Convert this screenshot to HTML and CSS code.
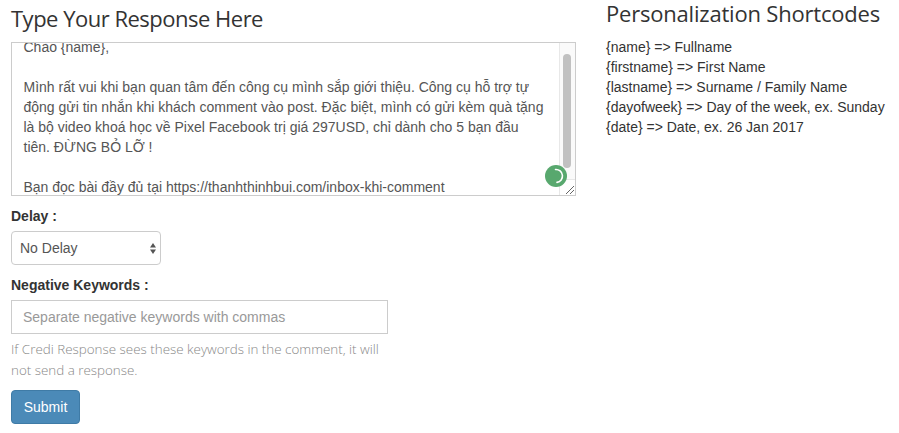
FILE: index.html
```html
<!DOCTYPE html>
<html lang="vi">
<head>
    <meta charset="UTF-8">
    <meta name="viewport" content="width=device-width, initial-scale=1.0">
    <title>Type Your Response Here</title>
    <link rel="stylesheet" href="styles.css">
</head>
<body>

    <div class="page">
        <div class="response-col">
            <h3 class="col-title response-title">Type Your Response Here</h3>

            <div class="message-box">
                <div class="message-text">
                    <p>Chào {name},</p>
                    <p>Mình rất vui khi bạn quan tâm đến công cụ mình sắp giới thiệu. Công cụ hỗ trợ tự động gửi tin nhắn khi khách comment vào post. Đặc biệt, mình có gửi kèm quà tặng là bộ video khoá học về Pixel Facebook trị giá 297USD, chỉ dành cho 5 bạn đầu tiên. ĐỪNG BỎ LỠ !</p>
                    <p>Bạn đọc bài đầy đủ tại https://thanhthinhbui.com/inbox-khi-comment</p>
                </div>
                <div class="scroll-track"><div class="scroll-thumb"></div></div>
                <div class="resize-corner">
                    <svg width="11" height="11" viewBox="0 0 11 11">
                        <path d="M2 10 L10 2 M6 10 L10 6" stroke="#666" stroke-width="1" fill="none"/>
                    </svg>
                </div>
                <!-- Зелёный значок поверх поля -->
                <div class="check-badge">
                    <svg width="22" height="22" viewBox="0 0 22 22">
                        <path d="M10.5 4.5 A6.5 6.5 0 0 1 12 17.4" stroke="#fff" stroke-width="1.6" fill="none" stroke-linecap="round"/>
                    </svg>
                </div>
            </div>

            <label class="field-label delay-label">Delay :</label>
            <div class="select-box">
                <span>No Delay</span>
                <svg width="6" height="11" viewBox="0 0 6 11">
                    <path d="M3 0 L6 4.5 H0 Z M3 11 L0 6.5 H6 Z" fill="#555"/>
                </svg>
            </div>

            <label class="field-label keywords-label">Negative Keywords :</label>
            <input class="keywords-input" type="text" placeholder="Separate negative keywords with commas">
            <p class="help-text">If Credi Response sees these keywords in the comment, it will not send a response.</p>

            <button class="submit-btn">Submit</button>
        </div>

        <div class="shortcodes-col">
            <h3 class="col-title shortcodes-title">Personalization Shortcodes</h3>
            <ul class="shortcodes">
                <li>{name} =&gt; Fullname</li>
                <li>{firstname} =&gt; First Name</li>
                <li>{lastname} =&gt; Surname / Family Name</li>
                <li>{dayofweek} =&gt; Day of the week, ex. Sunday</li>
                <li>{date} =&gt; Date, ex. 26 Jan 2017</li>
            </ul>
        </div>
    </div>

</body>
</html>
```

FILE: styles.css
```css
body {
    font-family: 'Liberation Sans', Arial, sans-serif;
    font-size: 14px;
    color: #333;
    background-color: #fff;
    margin: 0;
}

.page {
    display: flex;
    padding-left: 11px;
}

.response-col {
    width: 565px;
    padding-top: 5px;
}

.shortcodes-col {
    margin-left: 30px;
}

.col-title {
    font-family: 'Open Sans', sans-serif;
    font-size: 22px;
    font-weight: 400;
    line-height: 26px;
    color: #333;
    margin: 0;
}

.response-title {
    letter-spacing: -0.5px;
}

.shortcodes-title {
    letter-spacing: -0.2px;
}

/* Поле с текстом ответа */
.message-box {
    position: relative;
    height: 152px;
    margin-top: 11px;
    border: 1px solid #ccc;
    overflow: hidden;
    color: #555;
}

.message-text {
    width: 525px;
    margin-top: -6px;
    padding-left: 11.5px;
    line-height: 20px;
}

.message-text p {
    margin: 0 0 20px;
}

.scroll-track {
    position: absolute;
    top: 0;
    right: 0;
    bottom: 0;
    width: 15px;
    border-left: 1px solid #e8e8e8;
    background-color: #fafafa;
}

.scroll-thumb {
    width: 8px;
    height: 114px;
    margin: 11px 0 0 3px;
    border-radius: 4px;
    background-color: #c1c1c1;
}

.resize-corner {
    position: absolute;
    right: 0;
    bottom: 0;
    width: 15px;
    height: 15px;
    display: flex;
    align-items: flex-end;
    justify-content: flex-end;
    border-top: 1px solid #e8e8e8;
    border-left: 1px solid #e8e8e8;
    background-color: #fff;
}

.check-badge {
    position: absolute;
    right: 8px;
    bottom: 8px;
    width: 22px;
    height: 22px;
    border-radius: 50%;
    background-color: #58a86e;
}

.field-label {
    display: block;
    font-weight: 700;
    line-height: 20px;
}

.delay-label {
    margin-top: 10px;
}

.select-box {
    display: flex;
    align-items: center;
    justify-content: space-between;
    box-sizing: border-box;
    width: 150px;
    height: 34px;
    margin-top: 5px;
    padding: 0 4px 0 8px;
    border: 1px solid #ccc;
    border-radius: 4px;
    color: #555;
}

.keywords-label {
    margin-top: 10px;
}

.keywords-input {
    display: block;
    box-sizing: border-box;
    width: 377px;
    height: 34px;
    margin-top: 5px;
    padding: 6px 11px;
    border: 1px solid #ccc;
    font-family: 'Liberation Sans', Arial, sans-serif;
    font-size: 14px;
}

.keywords-input::placeholder {
    color: #999;
    opacity: 1;
}

.help-text {
    width: 377px;
    margin: 5px 0 0;
    font-family: 'Open Sans', sans-serif;
    font-weight: 300;
    font-size: 13.4px;
    line-height: 21px;
    color: #888;
}

.submit-btn {
    display: block;
    width: 69px;
    height: 34px;
    margin-top: 9px;
    padding: 6px 0;
    font-family: 'Liberation Sans', Arial, sans-serif;
    font-size: 14px;
    color: #fff;
    background-color: #4b8ab8;
    border: 1px solid #3f7ba6;
    border-radius: 4px;
}

.shortcodes {
    list-style: none;
    margin: 11px 0 0;
    padding: 0;
    line-height: 20px;
    color: #333;
}
```
